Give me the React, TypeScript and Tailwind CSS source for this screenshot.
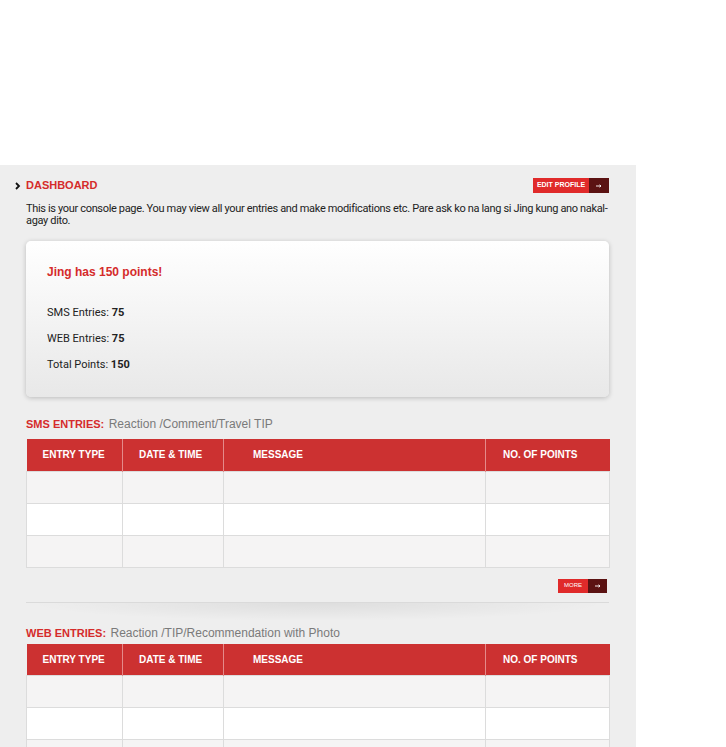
import React from "react";

const HEAD = "font-['Liberation_Sans',Arial,sans-serif]";
const BODY = "font-['Roboto','Liberation_Sans',Arial,sans-serif]";

const columns = [
  { label: "ENTRY TYPE", width: "w-[96px]", pad: "pl-[16px]" },
  { label: "DATE & TIME", width: "w-[101px]", pad: "pl-[16px]" },
  { label: "MESSAGE", width: "w-[262px]", pad: "pl-[29px]" },
  { label: "NO. OF POINTS", width: "w-[124px]", pad: "pl-[17px]" },
];

function Arrow() {
  return (
    <svg className="w-[6px] h-[4px]" viewBox="0 0 6 4" fill="none">
      <path d="M0 2h5M3.5 0.8L5 2 3.5 3.2" stroke="#fff" strokeWidth="0.9" />
    </svg>
  );
}

function ArrowButton({ label, big }: { label: string; big?: boolean }) {
  return (
    <div className={`flex ${big ? "h-[15px]" : "h-[14px]"}`}>
      <div
        className={`flex items-center justify-center bg-[#e02a2a] text-white ${HEAD} ${
          big ? "w-[56px] text-[7px] font-bold" : "w-[30px] text-[6px]"
        }`}
      >
        {label}
      </div>
      <div className={`flex items-center justify-center bg-[#5b1212] ${big ? "w-[20px]" : "w-[19px]"}`}>
        <Arrow />
      </div>
    </div>
  );
}

function EntriesTable({ rows }: { rows: number }) {
  return (
    <table className="w-[583px] border-collapse table-fixed">
      <thead>
        <tr className="h-[32px] bg-[#cc3131]">
          {columns.map((c, i) => (
            <th
              key={c.label}
              className={`${c.width} ${c.pad} text-left text-[10px] font-bold text-white ${HEAD} ${
                i > 0 ? "border-l border-[#e48a8a]" : ""
              }`}
            >
              {c.label}
            </th>
          ))}
        </tr>
      </thead>
      <tbody>
        {Array.from({ length: rows }).map((_, r) => (
          <tr key={r} className={`h-[32px] ${r % 2 === 0 ? "bg-[#f5f4f4]" : "bg-white"}`}>
            {columns.map((c) => (
              <td key={c.label} className="border border-[#dcdcdc]" />
            ))}
          </tr>
        ))}
      </tbody>
    </table>
  );
}

function SectionTitle({ title, sub }: { title: string; sub: string }) {
  return (
    <div className={`${HEAD} leading-[14px]`}>
      <span className="text-[11px] font-bold text-[#d52b2b]">{title}</span>{" "}
      <span className="text-[12px] text-[#7a7a7a]">{sub}</span>
    </div>
  );
}

export default function App() {
  return (
    <div className="min-h-[747px] bg-white pt-[165px]">
      <div className="w-[636px] bg-[#eeeeee] pl-[26px] pr-[27px] pt-[13px] pb-[20px]">
        {/* dashboard header */}
        <div className="flex items-center justify-between">
          <div className="relative flex items-center">
            <svg className="absolute left-[-11px] w-[6px] h-[8px]" viewBox="0 0 6 8" fill="none">
              <path d="M1 1l3 3-3 3" stroke="#111" strokeWidth="1.8" />
            </svg>
            <span className={`${HEAD} text-[11px] font-bold text-[#d52b2b] leading-[15px]`}>
              DASHBOARD
            </span>
          </div>
          <ArrowButton label="EDIT PROFILE" big />
        </div>

        <p className={`${BODY} mt-[10px] text-[11px] leading-[12px] text-[#222] tracking-[-0.34px]`}>
          <span className="whitespace-nowrap">
            This is your console page. You may view all your entries and make modifications etc.
            Pare ask ko na lang si Jing kung ano nakal-
          </span>
          <br />
          agay dito.
        </p>

        {/* points card */}
        <div className="mt-[14px] h-[156px] rounded-[5px] bg-gradient-to-b from-white to-[#e8e8e8] px-[21px] pt-[22px] shadow-[0_1px_5px_rgba(0,0,0,0.22)]">
          <div className={`${HEAD} text-[12px] font-bold text-[#d52b2b]`}>Jing has 150 points!</div>
          <div className={`${BODY} mt-[25px] flex flex-col gap-[12px] text-[11px] leading-[14px] text-[#222]`}>
            <div>
              SMS Entries: <b>75</b>
            </div>
            <div>
              WEB Entries: <b>75</b>
            </div>
            <div>
              Total Points: <b>150</b>
            </div>
          </div>
        </div>

        {/* sms entries */}
        <div className="mt-[19px]">
          <SectionTitle title="SMS ENTRIES:" sub="Reaction /Comment/Travel TIP" />
        </div>
        <div className="mt-[8px]">
          <EntriesTable rows={3} />
        </div>

        <div className="mt-[11px] flex justify-end pr-[2px]">
          <ArrowButton label="MORE" />
        </div>
        <div className="mt-[9px] h-px bg-[#dadada]" />
        <div className="h-[18px] bg-[radial-gradient(ellipse_at_top,rgba(0,0,0,0.07),transparent_70%)]" />

        {/* web entries */}
        <div className="mt-[4px]">
          <SectionTitle title="WEB ENTRIES:" sub="Reaction /TIP/Recommendation with Photo" />
        </div>
        <div className="mt-[4px]">
          <EntriesTable rows={3} />
        </div>
      </div>
    </div>
  );
}
